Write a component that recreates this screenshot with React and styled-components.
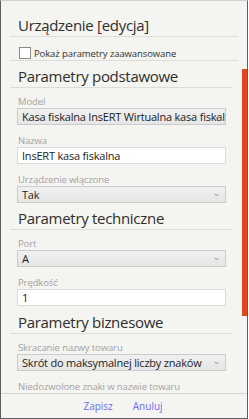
import React from 'react';
import styled, { createGlobalStyle } from 'styled-components';

const GlobalStyle = createGlobalStyle`
    html, body {
        margin: 0;
        padding: 0;
        background: #ffffff;
    }
    body {
        font-family: 'Open Sans', 'Noto Sans', sans-serif;
    }
`;

const Frame = styled.div`
    width: 248px;
    height: 419px;
    box-sizing: border-box;
    border: 1px solid #5e5e5e;
    border-top-color: #d2d2d2;
    background: #f4f4f0;
    display: flex;
    flex-direction: column;
    overflow: hidden;
`;

const Header = styled.div`
    margin: 0 9px;
    display: flex;
    flex-direction: column;
    flex-shrink: 0;
`;

const Title = styled.div`
    padding: 14px 0 0 8px;
    height: 21px;
    line-height: 21px;
    font-size: 15px;
    color: #2e2e2e;
    letter-spacing: -0.3px;
    border-bottom: 1px solid #dcdcd9;
`;

const OptionRow = styled.label`
    height: 23px;
    padding-left: 9px;
    display: flex;
    align-items: flex-end;
    gap: 3px;
    border-bottom: 1px solid #dcdcd9;
`;

const CheckBox = styled.span`
    width: 10px;
    height: 10px;
    border: 1px solid #8a8a8a;
    background: #ffffff;
    margin-bottom: 1px;
`;

const OptionText = styled.span`
    font-size: 9.5px;
    line-height: 13px;
    color: #333;
    letter-spacing: -0.1px;
`;

const Scroller = styled.div`
    position: relative;
    height: 332px;
    flex-shrink: 0;
    overflow: hidden;
`;

const ScrollThumb = styled.div`
    position: absolute;
    top: 8px;
    right: 0;
    width: 5px;
    height: 247px;
    background: #e0461f;
`;

const Section = styled.div`
    margin: 0 14px 0 9px;
`;

const SectionTitle = styled.div`
    padding: 5px 0 0 8px;
    height: 21px;
    line-height: 21px;
    font-size: 15px;
    color: #2e2e2e;
    letter-spacing: -0.3px;
    border-bottom: 1px solid #dcdcd9;
`;

const Fields = styled.div`
    padding: 8px 0 ${p => (p.$last ? '0' : '1px')} 7px;
    display: flex;
    flex-direction: column;
    gap: 10px;
`;

const Field = styled.div`
    width: 209px;
    display: flex;
    flex-direction: column;
`;

const Label = styled.div`
    height: 12px;
    line-height: 12px;
    padding-left: 1px;
    font-size: 9.5px;
    color: #a3a3a3;
    letter-spacing: -0.1px;
`;

const Box = styled.div`
    position: relative;
    height: 17px;
    box-sizing: border-box;
    border: 1px solid ${p => (p.$select ? '#cbcbcb' : '#dadada')};
    background: ${p => (p.$select ? 'linear-gradient(#f0f0f0, #e6e6e6)' : '#ffffff')};
    padding: 0 ${p => (p.$select ? '16px' : '4px')} 0 4px;
    font-size: 11px;
    line-height: 15px;
    color: #1c1c1c;
    letter-spacing: -0.2px;
    white-space: nowrap;
    overflow: hidden;
`;

const Chevron = styled.svg`
    position: absolute;
    right: 6px;
    top: 6px;
`;

const Footer = styled.div`
    height: 24px;
    flex-shrink: 0;
    border-top: 1px solid #d6d6d3;
    display: flex;
    justify-content: center;
    align-items: center;
    gap: 20px;
    padding-right: 2px;
`;

const FooterButton = styled.button`
    border: none;
    background: none;
    padding: 0;
    font-family: inherit;
    font-size: 10px;
    line-height: 14px;
    color: #6d6df0;
    cursor: pointer;
`;

const sections = [
    {
        title: 'Parametry podstawowe',
        fields: [
            { label: 'Model', value: 'Kasa fiskalna InsERT Wirtualna kasa fiskalna', select: true },
            { label: 'Nazwa', value: 'InsERT kasa fiskalna' },
            { label: 'Urządzenie włączone', value: 'Tak', select: true },
        ],
    },
    {
        title: 'Parametry techniczne',
        fields: [
            { label: 'Port', value: 'A', select: true },
            { label: 'Prędkość', value: '1' },
        ],
    },
    {
        title: 'Parametry biznesowe',
        fields: [
            { label: 'Skracanie nazwy towaru', value: 'Skrót do maksymalnej liczby znaków', select: true },
            { label: 'Niedozwolone znaki w nazwie towaru', value: '' },
        ],
    },
];

const App = () => {
    return (
        <>
            <GlobalStyle />
            <Frame>
                <Header>
                    <Title>Urządzenie [edycja]</Title>
                    <OptionRow>
                        <CheckBox />
                        <OptionText>Pokaż parametry zaawansowane</OptionText>
                    </OptionRow>
                </Header>
                <Scroller>
                    {sections.map((section, i) => (
                        <Section key={section.title}>
                            <SectionTitle>{section.title}</SectionTitle>
                            <Fields $last={i === 0}>
                                {section.fields.map((field) => (
                                    <Field key={field.label}>
                                        <Label>{field.label}</Label>
                                        <Box $select={field.select}>
                                            {field.value}
                                            {field.select && (
                                                <Chevron width="5" height="4" viewBox="0 0 5 4">
                                                    <polyline points="0.5,0.8 2.5,2.8 4.5,0.8" fill="none" stroke="#8d8d8d" strokeWidth="1" />
                                                </Chevron>
                                            )}
                                        </Box>
                                    </Field>
                                ))}
                            </Fields>
                        </Section>
                    ))}
                    <ScrollThumb />
                </Scroller>
                <Footer>
                    <FooterButton>Zapisz</FooterButton>
                    <FooterButton>Anuluj</FooterButton>
                </Footer>
            </Frame>
        </>
    );
};

export default App;
